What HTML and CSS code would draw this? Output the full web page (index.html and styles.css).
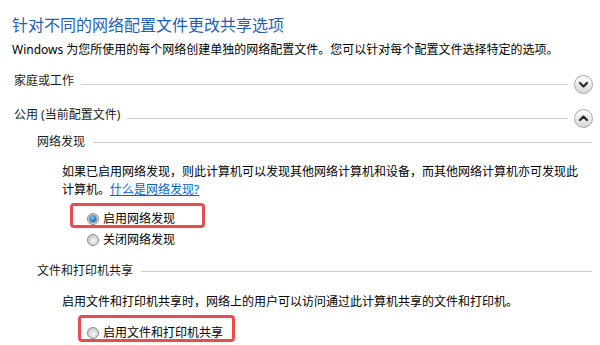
FILE: index.html
```
<!DOCTYPE html>
<html lang="zh-CN">
<head>
<meta charset="utf-8">
<title>高级共享设置</title>
<link rel="stylesheet" href="styles.css">
</head>
<body>
<div class="wrap">
  <h1 class="title">针对不同的网络配置文件更改共享选项</h1>
  <p class="desc">Windows 为您所使用的每个网络创建单独的网络配置文件。您可以针对每个配置文件选择特定的选项。</p>

  <div class="group-hdr first">
    <span class="hdr-label">家庭或工作</span>
    <span class="rule"></span>
    <span class="chev">
      <svg width="19" height="19" viewBox="0 0 19 19"><path d="M6 8 L9.5 11.5 L13 8" fill="none" stroke="#2a2a2a" stroke-width="2.2" stroke-linecap="round" stroke-linejoin="round"/></svg>
    </span>
  </div>

  <div class="group-hdr second">
    <span class="hdr-label">公用 (当前配置文件)</span>
    <span class="rule"></span>
    <span class="chev">
      <svg width="19" height="19" viewBox="0 0 19 19"><path d="M6 11 L9.5 7.5 L13 11" fill="none" stroke="#2a2a2a" stroke-width="2.2" stroke-linecap="round" stroke-linejoin="round"/></svg>
    </span>
  </div>

  <div class="sub-hdr sub-first">
    <span class="sub-label">网络发现</span>
    <span class="rule rule-sub"></span>
  </div>
  <p class="para para-first">如果已启用网络发现，则此计算机可以发现其他网络计算机和设备，而其他网络计算机亦可发现此<br>计算机。<a class="link" href="#">什么是网络发现?</a></p>

  <div class="options opt-first">
    <div class="mark mark-first"></div>
    <label class="opt"><span class="radio checked"></span><span>启用网络发现</span></label>
    <label class="opt"><span class="radio"></span><span>关闭网络发现</span></label>
  </div>

  <div class="sub-hdr sub-second">
    <span class="sub-label">文件和打印机共享</span>
    <span class="rule rule-sub"></span>
  </div>
  <p class="para para-second">启用文件和打印机共享时，网络上的用户可以访问通过此计算机共享的文件和打印机。</p>

  <div class="options opt-second">
    <div class="mark mark-second"></div>
    <label class="opt"><span class="radio"></span><span>启用文件和打印机共享</span></label>
    <label class="opt"><span class="radio"></span><span>关闭文件和打印机共享</span></label>
  </div>
</div>
</body>
</html>
```

FILE: styles.css
```
html, body {
  margin: 0;
  padding: 0;
  background: #ffffff;
}
body {
  width: 600px;
  height: 345px;
  overflow: hidden;
  font-family: "Noto Sans", "Noto Sans CJK SC", sans-serif;
  font-size: 12px;
  color: #000000;
}
.wrap {
  padding: 15px 7px 0 12px;
}
.title {
  margin: 0;
  font-size: 16px;
  line-height: 20px;
  font-weight: normal;
  color: #1f5fb6;
}
.desc {
  margin: 6px 0 0 0;
  line-height: 18px;
}
.group-hdr {
  display: flex;
  align-items: center;
  height: 20px;
  padding-left: 2px;
}
.group-hdr.first { margin-top: 15px; }
.group-hdr.second { margin-top: 14px; }
.hdr-label {
  line-height: 18px;
  margin-bottom: 6px;
  color: #1a1a1a;
}
.rule {
  flex: 1;
  height: 1px;
  background: #cfcfcf;
  margin: 0 6px 0 7px;
}
.chev {
  width: 19px;
  height: 19px;
  box-sizing: border-box;
  border-radius: 50%;
  border: 1px solid #a9a9a9;
  background: linear-gradient(#fefefe, #e6e6e6 60%, #d8d8d8);
  box-shadow: inset 0 1px 0 #ffffff;
  display: flex;
  align-items: center;
  justify-content: center;
}
.chev svg {
  display: block;
  margin: -1px;
}
.sub-hdr {
  display: flex;
  align-items: center;
  height: 18px;
  padding-left: 25px;
}
.sub-first { margin-top: 5px; }
.sub-second { margin-top: 12px; }
.sub-label {
  line-height: 18px;
  color: #1a1a1a;
}
.rule-sub {
  margin: 0 1px 0 8px;
}
.para {
  margin: 0;
  padding-left: 50px;
  line-height: 18px;
}
.para-first { margin-top: 12px; }
.para-second { margin-top: 13px; }
.link {
  color: #0066cc;
  text-decoration: underline;
}
.options {
  position: relative;
  display: flex;
  flex-direction: column;
  gap: 1px;
  padding-left: 75px;
}
.opt-first { margin-top: 10px; }
.opt-second { margin-top: 12px; }
.opt {
  display: flex;
  align-items: center;
  gap: 4px;
  height: 20px;
  line-height: 20px;
}
.radio {
  width: 12px;
  height: 12px;
  box-sizing: border-box;
  border-radius: 50%;
  border: 1px solid #8a8c8e;
  background: radial-gradient(circle at 55% 60%, #f8f8f8 0%, #dcdcdc 45%, #bdbdbd 100%);
  display: flex;
  align-items: center;
  justify-content: center;
  flex: none;
}
.radio.checked::after {
  content: "";
  width: 6px;
  height: 6px;
  border-radius: 50%;
  background: radial-gradient(circle at 40% 35%, #8fd0ff 0%, #2a7fd0 50%, #0b3f86 100%);
  box-shadow: 0 0 0 1px rgba(20, 50, 90, 0.45);
}
.mark {
  position: absolute;
  box-sizing: border-box;
  border: 3px solid #ea4b4d;
  border-radius: 4px;
}
.mark-first {
  left: 58px;
  top: -6px;
  width: 135px;
  height: 25px;
}
.mark-second {
  left: 66px;
  top: -8px;
  width: 157px;
  height: 27px;
}
```
